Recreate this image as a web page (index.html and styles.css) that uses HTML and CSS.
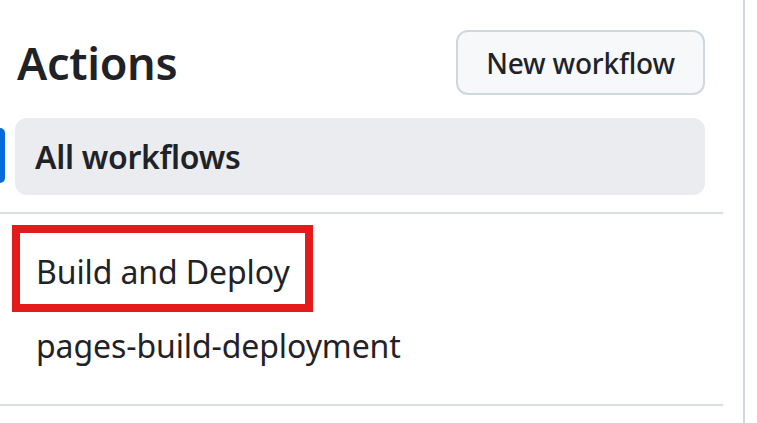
FILE: index.html
```html
<!DOCTYPE html>
<html lang="en">
<head>
<meta charset="utf-8">
<title>Actions</title>
<link rel="stylesheet" href="styles.css">
</head>
<body>
<div class="page">
  <aside class="sidebar">
    <div class="header">
      <h1 class="title">Actions</h1>
      <button class="btn" type="button">New workflow</button>
    </div>
    <nav class="nav">
      <a class="nav-item current" href="#">All workflows</a>
    </nav>
    <ul class="workflows">
      <li class="wf-row"><a class="wf-link highlighted" href="#">Build and Deploy</a></li>
      <li class="wf-row"><a class="wf-link" href="#">pages-build-deployment</a></li>
    </ul>
  </aside>
</div>
</body>
</html>
```
FILE: styles.css
```css
* { box-sizing: border-box; }
html, body { margin: 0; padding: 0; background: #ffffff; }
body {
  font-family: "Noto Sans", "Open Sans", sans-serif;
  color: #1f2328;
  width: 757px;
  height: 423px;
  overflow: hidden;
}
.page {
  display: flex;
  height: 423px;
}
.sidebar {
  width: 745px;
  height: 423px;
  border-right: 2px solid #d0d7de;
  padding-right: 20px;
}
.header {
  display: flex;
  align-items: center;
  justify-content: space-between;
  padding: 30px 18px 0 17px;
}
.title {
  margin: 0;
  font-size: 45px;
  font-weight: 600;
  line-height: 65px;
  letter-spacing: -0.3px;
}
.btn {
  height: 65px;
  width: 249px;
  border: 2px solid #d0d7de;
  background: #f6f8fa;
  border-radius: 12px;
  font-family: inherit;
  font-size: 28px;
  font-weight: 500;
  letter-spacing: -0.2px;
  color: #1f2328;
  padding: 0;
}
.nav {
  padding: 23px 18px 17px 15px;
  position: relative;
}
.nav-item {
  display: flex;
  align-items: center;
  height: 77px;
  padding-left: 20px;
  background: #ebecf0;
  border-radius: 12px;
  font-size: 32px;
  font-weight: 600;
  letter-spacing: -0.3px;
  color: #1f2328;
  text-decoration: none;
}
.nav-item.current::before {
  content: "";
  position: absolute;
  left: 0;
  top: 33px;
  width: 5px;
  height: 55px;
  background: #0969da;
  border-radius: 0 6px 6px 0;
}
.workflows {
  list-style: none;
  margin: 0;
  padding: 19px 0 23px 0;
  border-top: 2px solid #d8dee4;
  border-bottom: 2px solid #d8dee4;
}
.wf-row {
  height: 74px;
  padding-left: 20px;
}
.wf-link {
  display: inline-block;
  height: 71px;
  padding: 6px 15px 0 16px;
  line-height: 65px;
  font-size: 32px;
  font-weight: 400;
  letter-spacing: -0.1px;
  color: #1f2328;
  text-decoration: none;
  white-space: nowrap;
}
.highlighted {
  outline: 8px solid #e31b1b;
}
```
